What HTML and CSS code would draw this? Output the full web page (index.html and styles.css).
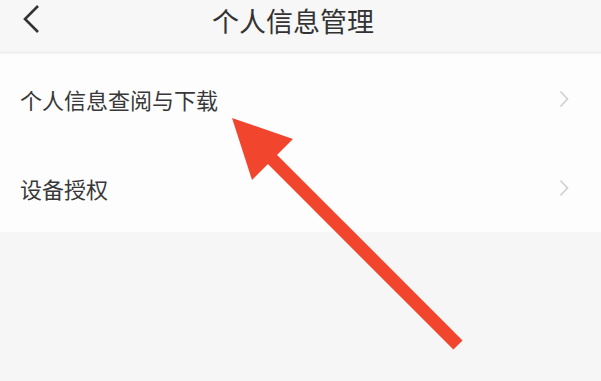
FILE: index.html
```html
<!DOCTYPE html>
<html lang="zh">
<head>
<meta charset="utf-8">
<link rel="stylesheet" href="styles.css">
</head>
<body>
<div class="page">
  <header class="nav">
    <svg class="back" width="18" height="30" viewBox="0 0 18 30"><path d="M16 2 L3 15 L16 28" fill="none" stroke="#333" stroke-width="2.6"/></svg>
    <h1 class="title">个人信息管理</h1>
  </header>
  <ul class="list">
    <li class="row"><span class="label">个人信息查阅与下载</span><svg class="chev" width="10" height="18" viewBox="0 0 10 18"><path d="M1.5 1.5 L8.5 9 L1.5 16.5" fill="none" stroke="#cfcfcf" stroke-width="1.6"/></svg></li>
    <li class="row"><span class="label">设备授权</span><svg class="chev" width="10" height="18" viewBox="0 0 10 18"><path d="M1.5 1.5 L8.5 9 L1.5 16.5" fill="none" stroke="#cfcfcf" stroke-width="1.6"/></svg></li>
  </ul>
  <div class="rest"></div>
  <svg class="arrow" width="601" height="381" viewBox="0 0 601 381">
    <line x1="266" y1="153" x2="458" y2="345" stroke="#f2452d" stroke-width="13"/>
    <polygon points="232,118 293,139 252,180" fill="#f2452d"/>
  </svg>
</div>
</body>
</html>
```
FILE: styles.css
```css
html, body {
  margin: 0;
  padding: 0;
}
body {
  width: 601px;
  height: 381px;
  overflow: hidden;
  background: #f6f6f7;
  font-family: "Noto Sans CJK SC", "Noto Sans", sans-serif;
}
.page {
  position: relative;
  width: 601px;
  height: 381px;
  display: flex;
  flex-direction: column;
}
.nav {
  height: 51px;
  background: #f7f7f7;
  border-bottom: 3px solid #f1f1f1;
  display: flex;
  align-items: center;
  justify-content: center;
  position: relative;
}
.back {
  position: absolute;
  left: 22px;
  top: 4px;
}
.title {
  margin: 0 15px 10px 0;
  font-size: 27px;
  font-weight: 400;
  color: #333;
  line-height: 27px;
}
.list {
  list-style: none;
  margin: 0;
  padding: 0;
  background: #fdfdfd;
}
.row {
  height: 89px;
  display: flex;
  align-items: center;
  justify-content: space-between;
  padding: 0 32px 0 20px;
}
.label {
  font-size: 22px;
  color: #383838;
  line-height: 22px;
}
.chev {
  display: block;
}
.rest {
  flex: 1;
  background: #f6f6f7;
}
.arrow {
  position: absolute;
  left: 0;
  top: 0;
}
```
